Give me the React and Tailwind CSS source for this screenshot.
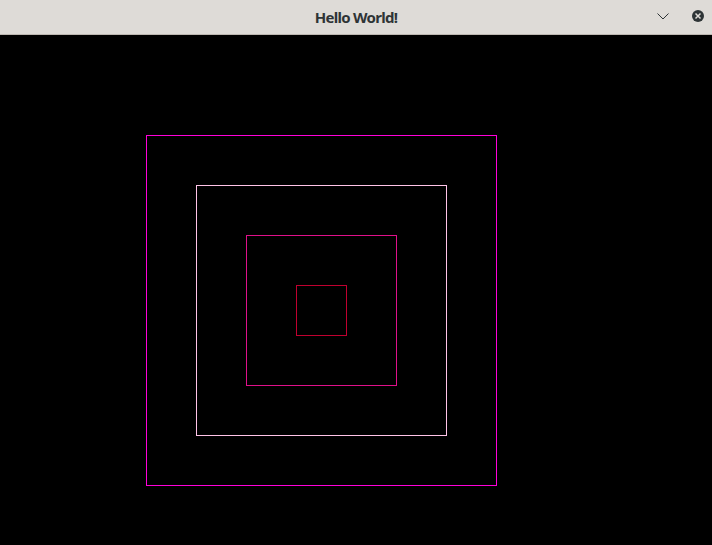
export default function App() {
  return (
    <div className="w-[712px] h-[545px] flex flex-col bg-black overflow-hidden" style={{ fontFamily: '"Noto Sans", "DejaVu Sans", sans-serif' }}>
      <div className="relative h-[35px] shrink-0 bg-[#dedbd7] border-b border-[#bdb7b1] flex items-center justify-center">
        <span className="text-[15px] font-bold text-[#2e3436] tracking-[-0.7px] leading-none">Hello World!</span>
        <svg className="absolute left-[656px] top-[11px]" width="14" height="10" viewBox="0 0 14 10">
          <path d="M1.5 2.5 L7 8 L12.5 2.5" fill="none" stroke="#2e3436" strokeWidth="1" />
        </svg>
        <svg className="absolute left-[691px] top-[9px]" width="14" height="14" viewBox="0 0 14 14">
          <circle cx="7" cy="7" r="6" fill="#2e3436" />
          <path d="M4.5 4.5 L9.5 9.5 M9.5 4.5 L4.5 9.5" stroke="#dedbd7" strokeWidth="1.5" />
        </svg>
      </div>
      <div className="flex-1 pl-[146px] pt-[100px]">
        <div className="w-[351px] h-[351px] border border-[#ff00d8] p-[49px]">
          <div className="w-full h-full border border-[#ffc4e8] p-[49px]">
            <div className="w-full h-full border border-[#e0108a] p-[49px]">
              <div className="w-full h-full border border-[#c00030]" />
            </div>
          </div>
        </div>
      </div>
    </div>
  );
}
